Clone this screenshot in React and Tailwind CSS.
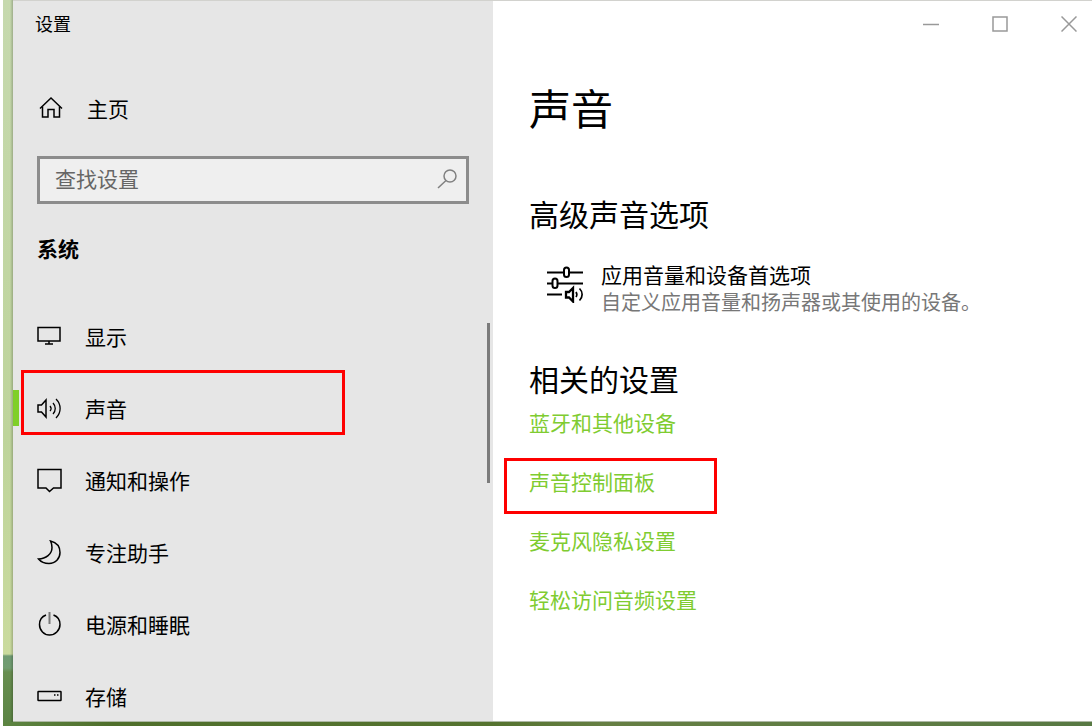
import React, { useState } from 'react';

const Icon = ({ children, size = 26, className = '' }) => (
  <svg
    width={size}
    height={size}
    viewBox={`0 0 ${size} ${size}`}
    fill="none"
    stroke="currentColor"
    strokeWidth="1.5"
    className={`shrink-0 ${className}`}
    aria-hidden="true"
  >
    {children}
  </svg>
);

const HomeIcon = () => (
  <Icon>
    <path d="M3 12.500 14 2 25 12.500" />
    <path d="M5.500 10.500v10.500h5.500v-7.500h6v7.500h5.500V10.500" />
  </Icon>
);

const DisplayIcon = () => (
  <Icon>
    <path d="M1 3.500h22v13.500H1zM12 17v3M8 20h8" />
  </Icon>
);

const SoundIcon = () => (
  <Icon>
    <path d="M1 9h3.500L9 4v17l-4.500-5H1z" />
    <path d="M13 10c1.300 1.500 1.300 3.500 0 5M16 7c3 3.200 3 7.800 0 11M19 3c5.500 5.500 5.500 13.500 0 19" strokeWidth="1.300" />
  </Icon>
);

const NotificationIcon = () => (
  <Icon>
    <path d="M1 1.500h23v18.500H16.500L12.500 23.500 9 20H1z" />
  </Icon>
);

const MoonIcon = () => (
  <Icon>
    <path d="M13.500 1C19.500 2.500 23 7 23 12.500c0 6-4.500 11-11 11-4.500 0-8-1.500-10.500-4.500C9 19 15 14 15 7.500 15 5 14.500 3 13.500 1z" />
  </Icon>
);

const PowerIcon = () => (
  <Icon>
    <path d="M9 3C5 4.500 2.500 8 2.500 12.500 2.500 18.300 7 23 12.500 23S23 18.300 23 12.500c0-4.500-2.500-8-6.500-9.500" />
    <path d="M12.500 0v12" stroke="#777" strokeWidth="2" />
  </Icon>
);

const StorageIcon = () => (
  <Icon>
    <rect x="1" y="7.500" width="23" height="9" rx="0.500" />
    <path d="M17 11h1.500M20 11h1.500" />
  </Icon>
);

const MixerIcon = () => (
  <svg width="38" height="38" viewBox="0 0 38 38" fill="none" stroke="currentColor" strokeWidth="2" className="mt-1 shrink-0" aria-hidden="true">
    <path d="M0 7.500h17M22 7.500h14M0 18.500h5M11 18.500h25M0 29.500h15" />
    <rect x="17" y="2.500" width="5" height="9.500" rx="2.500" />
    <rect x="5.500" y="13.500" width="5" height="9.500" rx="2.500" />
    <path d="M19 27h3l4-4v13.500l-4-4h-3z" strokeWidth="2.300" />
    <path d="M29 27c1 1.500 1 3.500 0 5M32.500 23.500c3.500 3.500 3.500 8.500 0 12" strokeWidth="1.700" />
  </svg>
);

const menu = [
  { nombre: '显示', icono: DisplayIcon },
  { nombre: '声音', icono: SoundIcon, marcado: true },
  { nombre: '通知和操作', icono: NotificationIcon },
  { nombre: '专注助手', icono: MoonIcon },
  { nombre: '电源和睡眠', icono: PowerIcon },
  { nombre: '存储', icono: StorageIcon }
];

const enlaces = [
  { nombre: '蓝牙和其他设备' },
  { nombre: '声音控制面板', marcado: true },
  { nombre: '麦克风隐私设置' },
  { nombre: '轻松访问音频设置' }
];

const Sidebar = () => {
  const [busqueda, setBusqueda] = useState('');
  const [activo, setActivo] = useState('声音');

  return (
    <aside className="flex w-[480px] shrink-0 flex-col bg-[#e6e6e6]">
      <div className="flex h-11 shrink-0 items-center pl-[22px] text-[18px]">设置</div>

      <button className="mt-10 flex h-12 shrink-0 items-center gap-6 pl-6 text-[21px]">
        <HomeIcon />
        主页
      </button>

      <label className="mr-6 ml-6 mt-[23px] flex h-12 shrink-0 items-center border-3 border-[#8c8c8c] bg-[#efefef] pr-2 pb-1 pl-[15px] text-[#666]">
        <input
          type="text"
          aria-label="查找设置"
          value={busqueda}
          onChange={(e) => setBusqueda(e.target.value)}
          placeholder="查找设置"
          className="h-9 min-w-0 flex-1 bg-transparent text-[21px] leading-9 outline-none placeholder:text-[#666]"
        />
        <Icon size={22} className="text-[#808080]">
          <circle cx="14" cy="9" r="6" />
          <path d="M10 13.500 2 21" />
        </Icon>
      </label>

      <h2 className="mt-[21px] flex h-12 shrink-0 items-center pl-6 text-[21px] font-bold">系统</h2>

      <nav className="relative mt-7 min-h-0 flex-1">
        <ul className="h-full overflow-hidden">
          {menu.map(({ nombre, icono: Icono, marcado }) => (
            <li key={nombre} className="relative">
              <button
                onClick={() => setActivo(nombre)}
                className="flex h-[72px] w-full items-center gap-[22px] pl-6 text-[21px]"
              >
                <Icono />
                {nombre}
              </button>
              {activo === nombre && <span className="absolute top-[17px] left-0 h-9 w-[6px] bg-[#7fcf28]" />}
              {marcado && (
                <span className="pointer-events-none absolute -top-[3px] left-2 h-[65px] w-[324px] border-3 border-[#fe0000]" />
              )}
            </li>
          ))}
        </ul>
        <span className="absolute top-[22px] right-[3px] h-40 w-[3px] bg-[#7b7b7b]" />
      </nav>
    </aside>
  );
};

const WindowButtons = () => (
  <div className="flex h-[46px] items-center justify-end gap-[23px] text-[#999]">
    <button aria-label="最小化" className="flex h-full w-[46px] items-center justify-center">
      <Icon size={16}><path d="M0 8.500h16" /></Icon>
    </button>
    <button aria-label="最大化" className="flex h-full w-[46px] items-center justify-center">
      <Icon size={16}><path d="M1 1h14v14H1z" /></Icon>
    </button>
    <button aria-label="关闭" className="flex h-full w-[46px] items-center justify-center">
      <Icon size={16}><path d="M0.500 0.500l15 15M15.500 0.500l-15 15" /></Icon>
    </button>
  </div>
);

const App = () => {
  return (
    <div className="h-screen bg-white pl-[3px] font-['Noto_Sans_CJK_SC',sans-serif] text-black">
      <div className="h-full bg-[linear-gradient(to_right,#0000_0,#0000_7px,#0003_10px,#0000_10px),linear-gradient(to_bottom,#c6d9ae_0,#bed49b_60%,#cadb9e_654px,#6f9b73_656px,#719d70_668px,#688e50_672px,#5b8444_100%)] pl-[10px]">
        <div className="flex h-full flex-col">
          <div className="flex min-h-0 flex-1 border-t border-b border-t-[#d2d2ce] border-b-[#adb8a4]">
            <Sidebar />

            <main className="min-w-0 flex-1 bg-white">
              <WindowButtons />
              <div className="pl-9">
                <h1 className="mt-[30px] text-[42px] leading-[60px]">声音</h1>

                <h2 className="mt-14 text-[30px] leading-10">高级声音选项</h2>
                <button className="mt-7 flex gap-4 pl-[18px] text-left">
                  <MixerIcon />
                  <span className="flex flex-col leading-[27px]">
                    <span className="text-[21px]">应用音量和设备首选项</span>
                    <span className="text-[20px] text-[#777]">自定义应用音量和扬声器或其使用的设备。</span>
                  </span>
                </button>

                <h2 className="mt-[43px] text-[30px] leading-10">相关的设置</h2>
                <ul className="mt-[10px] flex flex-col gap-[31px] text-[21px] leading-7 text-[#7fcc31]">
                  {enlaces.map(({ nombre, marcado }) => (
                    <li key={nombre} className="relative">
                      <a href="#" className="hover:underline">{nombre}</a>
                      {marcado && (
                        <span className="pointer-events-none absolute -top-[9px] -left-[25px] h-14 w-[213px] border-3 border-[#fe0000]" />
                      )}
                    </li>
                  ))}
                </ul>
              </div>
            </main>
          </div>
          <div className="-ml-[10px] h-1 shrink-0 bg-[linear-gradient(to_right,#5d8542_0,#4f6f2b_10%,#55732f_45%,#667f43_55%,#587943_100%)]" />
        </div>
      </div>
    </div>
  );
};

export default App;
